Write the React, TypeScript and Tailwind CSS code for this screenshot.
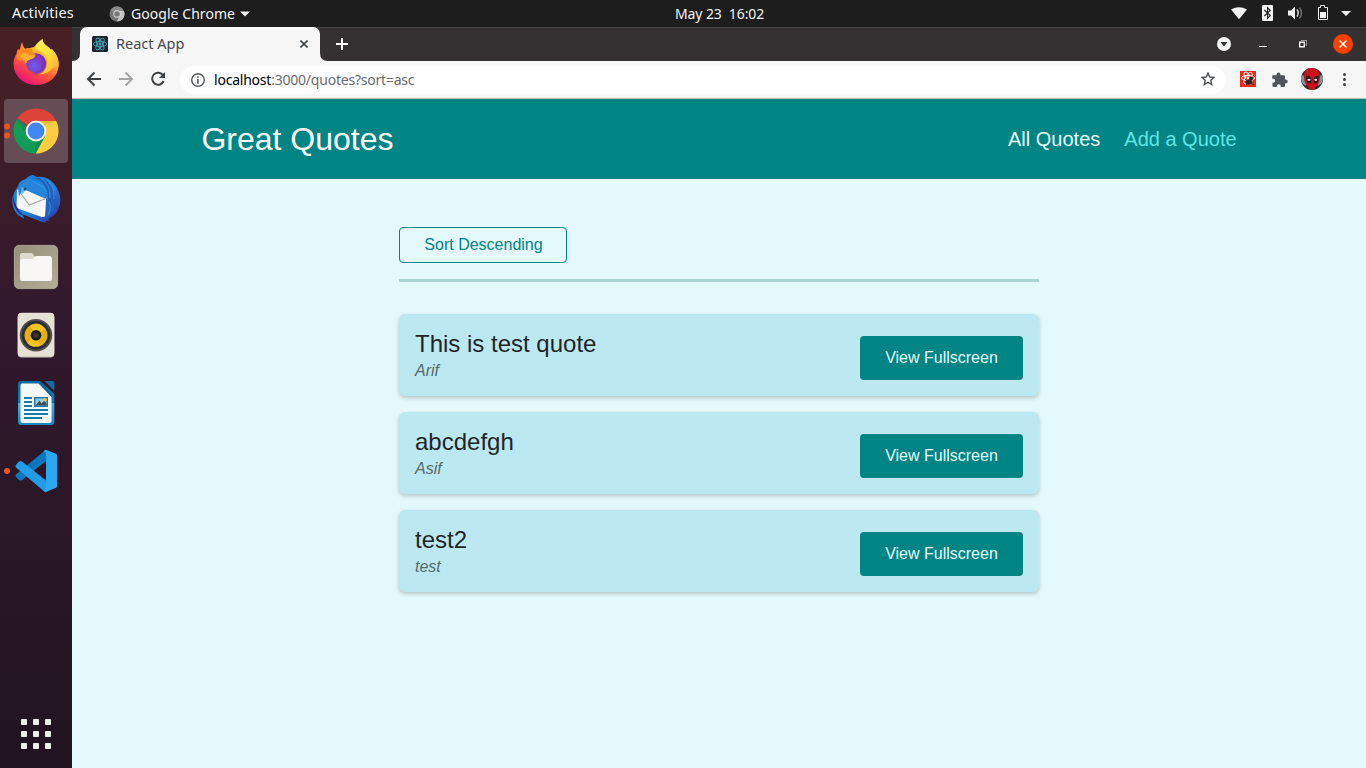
import type { ReactNode } from 'react';

const quotes = [
  { text: 'This is test quote', author: 'Arif' },
  { text: 'abcdefgh', author: 'Asif' },
  { text: 'test2', author: 'test' },
];

function TopBar() {
  return (
    <header className="relative flex h-[27px] shrink-0 items-center bg-[#1d1d1d] text-[14px] text-[#f2f2f2]">
      <span className="ml-3 w-[97px] pb-px text-[14.500px] tracking-[0.15px]">Activities</span>
      <svg width="16" height="16" viewBox="0 0 16 16">
        <circle cx="8" cy="8" r="7.5" fill="#777" />
        <path d="M8 8 1.6 4A7.500 7.500 0 0 1 14.600 4.500z" fill="#8b8b8b" />
        <path d="M8 5h6.900A7.500 7.500 0 0 1 7.800 15.500L11 9.500z" fill="#c4c4c4" />
        <circle cx="8" cy="8" r="3.700" fill="#ddd" />
        <circle cx="8" cy="8" r="2.800" fill="#777" />
      </svg>
      <span className="ml-1.5 w-[109px] pb-px tracking-[0.05px] whitespace-nowrap">Google Chrome</span>
      <svg width="10" height="6" viewBox="0 0 10 6"><path d="M0 .5h10L5 5.500z" fill="#f2f2f2" /></svg>
      <span className="absolute left-[675px] pb-px tracking-[-0.1px] whitespace-pre">May 23  16:02</span>
      <svg className="ml-auto" width="136" height="27" viewBox="1230 0 136 27">
        <path d="M1231 9.500Q1239 4.800 1247 9.500L1239 19.300z" fill="#f2f2f2" />
        <rect x="1262" y="5" width="11" height="16" rx="1" fill="#f2f2f2" />
        <path d="m1264.300 10 6 5.500-2.800 2.800V7.700l2.800 2.800-6 5.500" fill="none" stroke="#1d1d1d" strokeWidth="1.100" />
        <path d="M1288 10.500h3l4-4v13l-4-4h-3z" fill="#f2f2f2" />
        <path d="M1297 9.500q2.500 3.500 0 7" fill="none" stroke="#ddd" strokeWidth="1.400" />
        <path d="M1299.500 7.700q4 5.300 0 10.600" fill="none" stroke="#777" strokeWidth="1.300" />
        <path d="M1320.500 5.500h4v2h3v12h-9v-12h2z" fill="none" stroke="#f2f2f2" />
        <path d="M1320 12h6v6h-6zM1341 11h10l-5 5z" fill="#f2f2f2" />
      </svg>
    </header>
  );
}

function DockItem({ active, children }: { active?: boolean; children: ReactNode }) {
  return (
    <div className={active ? 'size-16 shrink-0 rounded-[4px] bg-[#664c55]' : 'size-16 shrink-0'}>
      <svg className="overflow-visible" width="64" height="64" viewBox="0 0 64 64">{children}</svg>
    </div>
  );
}

function Dock() {
  return (
    <aside className="flex w-[72px] shrink-0 flex-col items-center gap-1 bg-gradient-to-b from-[#482024] via-[#31182d] via-40% to-[#211420] pt-1">
      <DockItem>
        <defs>
          <linearGradient id="ff" x1=".85" y1="0" x2=".25" y2="1">
            <stop offset="0" stopColor="#fff44f" /><stop offset=".35" stopColor="#ffb62e" /><stop offset=".62" stopColor="#ff5a36" /><stop offset="1" stopColor="#e80b81" />
          </linearGradient>
          <radialGradient id="ffg" cx=".4" cy=".65"><stop offset="0" stopColor="#6b61ed" /><stop offset="1" stopColor="#8534bd" /></radialGradient>
          <linearGradient id="fft" x1="0" y1="0" x2="1" y2="1"><stop offset="0" stopColor="#fff44f" /><stop offset=".5" stopColor="#ffe03e" /><stop offset="1" stopColor="#ffa52c" /></linearGradient>
        </defs>
        <path d="M18 11.500q.5 4 3 6.500 2.500-1 5-1l4-1Q33 12 38.500 8q-.5 3 3 6.500l5 4 1.500-.5q6.700 7 6.700 15C54.700 46 44.500 54 32 54 19 54 9.500 44.500 9.500 32.500q0-5.500 3-9.500 0-2 1-4l1.500-1 1 1q.5-4 2-7.500" fill="url(#ff)" />
        <path d="M38.500 8q-6 4-7.500 10 4 .5 9 5 5 5 2.500 12.500-2 6-8 8 9 0 14.500-6.500l5.500-2q.5-9-6-16l-1 1q-1-3-5-5.500-4-3-4-6.500" fill="url(#fft)" />
        <circle cx="32" cy="32.300" r="10" fill="url(#ffg)" />
        <path d="M34 23q6 1 8 7 2 7-4 12-5 3-11 .5 9-1 11-7 2-5-1-9z" fill="#5530b8" opacity=".35" />
        <path d="M18 11.500q.5 4 3 6.500 3.500-1.500 7 .5 0 3 3.500 5.500-1 3.500-6 4.500-3 1-3.500 4-3-4-5.500-3-4 0-4-4.500l3.500-5.500q.5-4 2-8" fill="#ff8b20" />
        <path d="M16.500 23.500q5-3 9 .5l6 .5q-1 3-6 4-3 1-3.500 4-1.500-5-5.500-6z" fill="#ffb02c" />
      </DockItem>
      <DockItem active>
        <path d="M32 22H52.200A22.500 22.500 0 0 1 31.500 54.500L41 37z" fill="#ffcd40" />
        <path d="M13 20a22.500 22.500 0 0 0 18.500 34.500L41 37H23z" fill="#109d58" />
        <path d="M32 32 13.300 19.500A22.500 22.500 0 0 1 52.200 22H32z" fill="#dd4437" />
        <path d="m13.300 19.800 9.900 17.200 3-6z" fill="#109d58" />
        <path d="M35 22h17.200L41 26z" fill="#dba52f" opacity=".55" />
        <path d="m41 37-9.500 17.500L31 42z" fill="#0c8148" opacity=".5" />
        <path d="m13.500 20 9.500 9.500.5 7z" fill="#0c8148" opacity=".4" />
        <circle cx="32" cy="32" r="10.400" fill="#f5f5f5" /><circle cx="32" cy="32" r="8.400" fill="#4285f4" />
        <circle cx="3" cy="27.500" r="3" fill="#e95420" /><circle cx="3" cy="36.500" r="3" fill="#e95420" />
      </DockItem>
      <DockItem>
        <defs><linearGradient id="tb" x2="1" y2="1"><stop stopColor="#1b80d9" /><stop offset=".55" stopColor="#2382d5" /><stop offset="1" stopColor="#33279c" /></linearGradient></defs>
        <path d="M29 8q-5 .5-7.500 4.500-10 6.500-13 18-1.500 10 5.500 17.500l6.500 4-2.500-5 20 8 5 .5-2-1.500 5-.5-2-1.500q12-5 12.500-20Q55 20 46 13q-6-4-13-3z" fill="url(#tb)" />
        <path d="m13 23 3-2.500 26 11.500-.8 17.500-3.500.5-25.200-9z" fill="#f7f7f7" />
        <path d="m15 24 10.300 14L43 31" fill="none" stroke="#aaa" strokeWidth="1.200" />
        <path d="M14.500 25q-2-8 3.500-11.500 6-3 11-.5 10 3 13.500 18.500l-8.500-6-12-2.500-5 2-2 5z" fill="#2784dd" />
        <path d="M29 11q14 3 15 19l-3 21 2-.5q9-6 8.500-19.500Q49 15 37 11z" fill="#225fbd" />
        <path d="M29 15q9 2 13 10M37 11q10 7 9 20M43 12q8 9 7 20M45 35q3 5-1 13" fill="none" stroke="#329ee9" strokeWidth="1.300" opacity=".65" />
        <path d="m17.500 20 5 2-5 6z" fill="#69b8e7" /><circle cx="21" cy="22" r="1.500" fill="#294565" />
        <path d="M9 29q2 11 10 19l-3-.5Q8 40 9 29" fill="#262ba0" />
      </DockItem>
      <DockItem>
        <defs><linearGradient id="fi" x2="1" y2="1"><stop stopColor="#958e79" /><stop offset="1" stopColor="#b5ad97" /></linearGradient></defs>
        <rect x="10.400" y="10.400" width="43.200" height="43.200" rx="4.500" fill="url(#fi)" stroke="#bdb6a3" strokeWidth=".8" />
        <path d="M16 27v-6.500q0-2.500 2.500-2.500H27q1.500 0 2.200 1.200l1.800 2.800v5z" fill="#dedacd" />
        <path d="M16 26.500q0-2.500 2.500-2.500H27q1.500 0 2.500-1.500t3-1.500h13q2.500 0 2.500 2.500V43.500q0 2.500-2.500 2.500h-27q-2.500 0-2.500-2.500z" fill="#f8f7f5" />
      </DockItem>
      <DockItem>
        <rect x="13.700" y="10" width="36.600" height="44.500" rx="4" fill="#c8c1b4" /><rect x="13.700" y="9.700" width="36.600" height="43.800" rx="4" fill="#e6e0d5" />
        <circle cx="32" cy="32.300" r="16.200" fill="#4f4e4e" /><circle cx="32" cy="32.300" r="14.200" fill="#292b2e" />
        <circle cx="32" cy="32.300" r="11.500" fill="#e5b010" /><path d="m26 23 6 9 9-6Q34 17 26 23m-3 17 9-8 4 10Q28 46 23 40" fill="#ffd22b" opacity=".6" />
        <circle cx="32" cy="32.300" r="5.300" fill="#171717" /><circle cx="32" cy="32.300" r="3" fill="#343434" />
      </DockItem>
      <DockItem>
        <defs><linearGradient id="lw" x2="0" y2="1"><stop stopColor="#116b9f" /><stop offset=".49" stopColor="#087fb8" /><stop offset=".5" stopColor="#48afe0" /><stop offset="1" stopColor="#1689bd" /></linearGradient></defs>
        <path d="M17 10h19l14.300 13v28q0 3-3 3H17q-3 0-3-3V13q0-3 3-3" fill="url(#lw)" />
        <path d="M18 12.500h16.500L47.500 26v24q0 2-2 2H18.500q-2 0-2-2V14.500q0-2 1.500-2" fill="#f7f9fa" />
        <path d="m36 12.500 12 13.500-.5-2.500L37.500 12z" fill="#10608f" />
        <path d="M40.500 10H49q1.300 0 1.300 1.500v8.300z" fill="#126ca0" />
        <path d="M20 27h8M20 31h8M20 35h8M20 39h24M20 43h24M20 47h18" stroke="#147cad" strokeWidth="2" />
        <path d="M30 26h14v10H30z" fill="#1c7aaa" /><path d="M31.500 27.500h11v7h-11z" fill="#9bcde5" /><path d="m31.500 34.500 4-5 2 3 3-3 2 3v2z" fill="#444c4f" /><circle cx="41" cy="28.800" r="1.800" fill="#f8c321" />
      </DockItem>
      <DockItem>
        <path d="m11.500 37.500 3.500 3.500q1.500 1 3 0l24-19V11q-1 .2-2.300 1.400L12 35.500q-1 1-.5 2" fill="#0879bd" />
        <path d="M11.500 26.500 15 22.500q1.500-1 3 0l24 19v12q-1-.2-2.300-1.500L12 28.500q-1-1-.5-2" fill="#219de5" />
        <path d="m42 10.800 10 4q1 .5 1 1.500v31q0 1-1 1.500l-10 4.200q-1 .2-2.500-1.500 2.500.5 2.500-2.500V15q0-2.500-2.500-2.500 1.500-1.900 2.500-1.700" fill="#2ba7f1" />
        <circle cx="3" cy="32" r="3" fill="#e95420" />
      </DockItem>
      <div className="mt-auto mb-[19px] grid grid-cols-3 gap-1.5">
        {Array.from({ length: 9 }, (_, i) => <i key={i} className="size-1.5 rounded-[1px] bg-[#eeeeec]" />)}
      </div>
    </aside>
  );
}

function Atom({ stroke }: { stroke: string }) {
  return (
    <g fill="none" stroke={stroke} strokeWidth=".9">
      <ellipse cx="8" cy="8" rx="6.600" ry="2.600" />
      <ellipse cx="8" cy="8" rx="6.600" ry="2.600" transform="rotate(60 8 8)" />
      <ellipse cx="8" cy="8" rx="6.600" ry="2.600" transform="rotate(120 8 8)" />
      <circle cx="8" cy="8" r="1.100" fill={stroke} />
    </g>
  );
}

function TabStrip() {
  return (
    <div className="flex h-[34px] shrink-0 bg-[#333132] pl-2 shadow-[inset_0_1px_0_#454344]">
      <div className="relative flex w-60 items-center rounded-t-[7px] bg-[#f7f7f7] pl-3 text-[14.500px] text-[#454749]">
        <svg className="absolute bottom-0 -left-2" width="8" height="8"><path d="M8 0v8H0q8 0 8-8" fill="#f7f7f7" /></svg>
        <svg className="absolute -right-2 bottom-0" width="8" height="8"><path d="M0 0v8h8Q0 8 0 0" fill="#f7f7f7" /></svg>
        <svg width="16" height="16" viewBox="0 0 16 16"><rect width="16" height="16" rx="1.500" fill="#20232a" /><Atom stroke="#3fa9c2" /></svg>
        <span className="ml-2 pb-px">React App</span>
        <svg className="mr-3 ml-auto" width="8" height="8"><path d="m.5.5 7 7m0-7-7 7" stroke="#3c4043" strokeWidth="1.600" /></svg>
      </div>
      <svg className="ml-4 self-center" width="12" height="12"><path d="M6 0v12M0 6h12" stroke="#fff" strokeWidth="2" /></svg>
      <svg className="ml-auto" width="156" height="34" viewBox="1210 27 156 34">
        <circle cx="1224" cy="44" r="7" fill="#f7f7f7" /><path d="M1220.500 42h7l-3.500 4.500z" fill="#333132" />
        <path d="M1259 46.500h8" stroke="#f7f7f7" />
        <path d="M1301 40.500h5.500v5.500" fill="none" stroke="#99989a" />
        <path d="M1299.700 42.200h4.600v4.600h-4.600z" fill="none" stroke="#f7f7f7" strokeWidth="1.400" />
        <circle cx="1343" cy="44" r="10" fill="#fa4000" /><path d="m1339.500 40.500 7 7m0-7-7 7" stroke="#fff" strokeWidth="1.500" />
      </svg>
    </div>
  );
}

function Toolbar() {
  return (
    <div className="flex h-[38px] shrink-0 items-center border-b border-[#b9b9b9] bg-[#f7f7f7]">
      <svg width="108" height="37" viewBox="72 61 108 37">
        <path d="M101 79H88m6.500-6.500L88 79l6.500 6.500" fill="none" stroke="#3c4043" strokeWidth="2" />
        <path d="M119 79h13m-6.500-6.500L132 79l-6.500 6.500" fill="none" stroke="#a5a6a7" strokeWidth="2" />
        <path d="M163.200 75.400a6 6 0 1 0 .5 5.600" fill="none" stroke="#3c4043" strokeWidth="2" /><path d="M165 72v6h-6z" fill="#3c4043" />
      </svg>
      <div className="flex h-7 w-[1046px] items-center rounded-full bg-white pl-[11px] text-[14px] text-[#696b6e]">
        <svg width="14" height="14" viewBox="0 0 14 14"><circle cx="7" cy="7" r="6.300" fill="none" stroke="#55585c" strokeWidth="1.400" /><path d="M7 6v4.700M7 3.200v1.600" stroke="#55585c" strokeWidth="1.600" /></svg>
        <span className="ml-[9px] pb-px tracking-[-0.22px]"><span className="text-black">localhost</span>:3000/quotes?sort=asc</span>
        <svg className="mr-[11px] mb-px ml-auto" width="14" height="14" viewBox="0 0 14 14"><path d="m7 1 1.700 4 4.300.4-3.200 2.800.9 4.300L7 10.300l-3.700 2.200.9-4.300L1 5.400 5.300 5z" fill="none" stroke="#505357" strokeWidth="1.400" /></svg>
      </div>
      <svg width="140" height="37" viewBox="1226 61 140 37">
        <path d="M1240 71h16v16h-16z" fill="#e9291f" />
        <g transform="translate(1240 70)"><Atom stroke="#fff" /></g>
        <ellipse cx="1249" cy="82" rx="3.500" ry="2.500" fill="#35231f" /><circle cx="1251" cy="78.500" r="2" fill="#35231f" /><path d="m1245 79 9 6m-8 0 7-7" stroke="#35231f" />
        <path d="M1273 75.300h3.500v-.8a2 2 0 0 1 4 0v.8h3.500q1 0 1 1v3.200h.7a2 2 0 0 1 0 4h-.7V86q0 1-1 1h-3.200v-.7a2 2 0 0 0-4.100 0v.7h-3.200q-1 0-1-1v-3.200h.7a2 2 0 0 0 0-4h-1V76.300q0-1 .8-1" fill="#505357" />
        <circle cx="1312" cy="79" r="11" fill="#242728" />
        <path d="M1302 75q-2.500 4 1 9l3 2V76zM1322 75q2.500 4-1 9l-3 2V76z" fill="#81949e" />
        <path d="M1304 77q0-9 7-9 9 0 9 9 0 8-8 13.500-8-5.500-8-13.500" fill="#cf101c" />
        <path d="M1306 75.500q5 0 5.500 5-1 5-4 2-2-3-1.500-7M1318.500 75.500q-5 0-5 5 1 5 4 2 1.500-3 1-7" fill="#20191b" /><ellipse cx="1309" cy="79.800" rx="1.600" ry="1.100" fill="#fff" /><ellipse cx="1315.800" cy="79.800" rx="1.500" ry="1.100" fill="#fff" />
        <circle cx="1344.500" cy="74.500" r="1.500" fill="#3c4043" /><circle cx="1344.500" cy="79.500" r="1.500" fill="#3c4043" /><circle cx="1344.500" cy="84.500" r="1.500" fill="#3c4043" />
      </svg>
    </div>
  );
}

function QuotesPage() {
  return (
    <div className="flex-1 bg-[#e3f9fb] font-['Liberation_Sans',sans-serif]">
      <header className="flex h-20 items-center justify-between bg-[#008484] px-[10%]">
        <h1 className="text-[32px] text-white">Great Quotes</h1>
        <nav className="flex gap-6 text-[20px]"><a className="text-[#e6fcfc]">All Quotes</a><a className="text-[#5fe4e4]">Add a Quote</a></nav>
      </header>
      <main className="mx-auto mt-12 w-[640px]">
        <div className="mb-8 border-b-[3px] border-[#acd6d6] pb-4">
          <button className="block h-9 w-[168px] rounded-[4px] border border-[#008484] pl-px text-[16px] text-[#008484]">Sort Descending</button>
        </div>
        <ul className="flex flex-col gap-4">
          {quotes.map((quote) => (
            <li key={quote.text} className="flex h-[82px] items-end justify-between rounded-[6px] bg-[#bce8f1] p-4 shadow-[0_2px_4px_rgba(0,0,0,0.2)]">
              <figure className="self-start">
                <blockquote className="text-[24px] leading-7 text-[#212529]">{quote.text}</blockquote>
                <figcaption className="mt-1 text-[16px] leading-[18px] text-[#566a6b] italic">{quote.author}</figcaption>
              </figure>
              <a className="flex h-11 w-[163px] items-center justify-center rounded-[4px] bg-[#008484] text-[16px] text-[#e6fcfc]">View Fullscreen</a>
            </li>
          ))}
        </ul>
      </main>
    </div>
  );
}

export default function App() {
  return (
    <div className="flex h-screen w-full flex-col overflow-hidden font-['Noto_Sans',sans-serif]">
      <TopBar />
      <div className="flex min-h-0 flex-1">
        <Dock />
        <div className="flex min-w-0 flex-1 flex-col"><TabStrip /><Toolbar /><QuotesPage /></div>
      </div>
    </div>
  );
}
